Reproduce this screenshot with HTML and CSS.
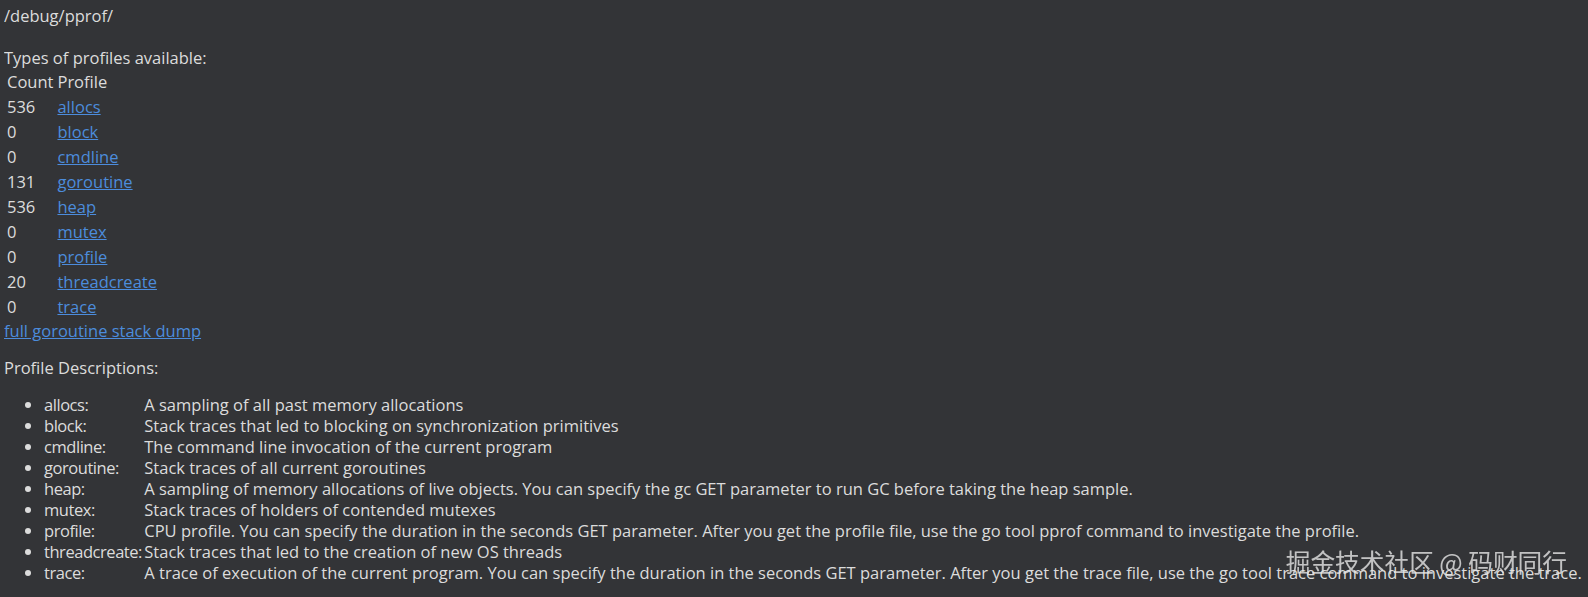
FILE: index.html
```html
<!DOCTYPE html>
<html>
<head>
<meta charset="utf-8">
<title>/debug/pprof/</title>
<link rel="stylesheet" href="styles.css">
</head>
<body>
/debug/pprof/<br>
<br>
Types of profiles available:
<table class="profiles">
<thead><tr><td class="count">Count</td><td>Profile</td></tr></thead>
<tbody>
<tr><td class="count">536</td><td><a href="#">allocs</a></td></tr>
<tr><td class="count">0</td><td><a href="#">block</a></td></tr>
<tr><td class="count">0</td><td><a href="#">cmdline</a></td></tr>
<tr><td class="count">131</td><td><a href="#">goroutine</a></td></tr>
<tr><td class="count">536</td><td><a href="#">heap</a></td></tr>
<tr><td class="count">0</td><td><a href="#">mutex</a></td></tr>
<tr><td class="count">0</td><td><a href="#">profile</a></td></tr>
<tr><td class="count">20</td><td><a href="#">threadcreate</a></td></tr>
<tr><td class="count">0</td><td><a href="#">trace</a></td></tr>
</tbody>
</table>
<a href="#">full goroutine stack dump</a>
<br>
<p class="desc-title">Profile Descriptions:</p>
<ul class="descs">
<li><div class="profile-name">allocs: </div> A sampling of all past memory allocations</li>
<li><div class="profile-name">block: </div> Stack traces that led to blocking on synchronization primitives</li>
<li><div class="profile-name">cmdline: </div> The command line invocation of the current program</li>
<li><div class="profile-name">goroutine: </div> Stack traces of all current goroutines</li>
<li><div class="profile-name">heap: </div> A sampling of memory allocations of live objects. You can specify the gc GET parameter to run GC before taking the heap sample.</li>
<li><div class="profile-name">mutex: </div> Stack traces of holders of contended mutexes</li>
<li><div class="profile-name">profile: </div> CPU profile. You can specify the duration in the seconds GET parameter. After you get the profile file, use the go tool pprof command to investigate the profile.</li>
<li><div class="profile-name">threadcreate: </div> Stack traces that led to the creation of new OS threads</li>
<li><div class="profile-name">trace: </div> A trace of execution of the current program. You can specify the duration in the seconds GET parameter. After you get the trace file, use the go tool trace command to investigate the trace.</li>
</ul>
<div class="watermark">掘金技术社区 @ 码财同行</div>
</body>
</html>
```

FILE: styles.css
```css
html {
  background: #333437;
}
body {
  margin: 5px 4px;
  background: #333437;
  color: #dcdcdc;
  font-family: "Open Sans", "Noto Sans", sans-serif;
  font-size: 16.5px;
  line-height: 21px;
}
a {
  color: #4c8cdc;
}
.profiles {
  border-spacing: 2px;
  border-collapse: separate;
  margin: 0;
}
.profiles td {
  padding: 1px;
  line-height: 21px;
}
.profiles .count {
  width: 46px;
}
.desc-title {
  margin: 16px 0;
}
.descs {
  margin: 16px 0;
  padding-left: 40px;
}
.profile-name {
  display: inline-block;
  width: 96px;
  white-space: nowrap;
  letter-spacing: -0.45px;
}
.watermark {
  position: fixed;
  right: 21px;
  bottom: 22px;
  font-family: "Noto Sans CJK SC", sans-serif;
  font-size: 24.7px;
  line-height: 28px;
  color: rgba(230, 230, 230, 0.8);
  white-space: nowrap;
}
```
